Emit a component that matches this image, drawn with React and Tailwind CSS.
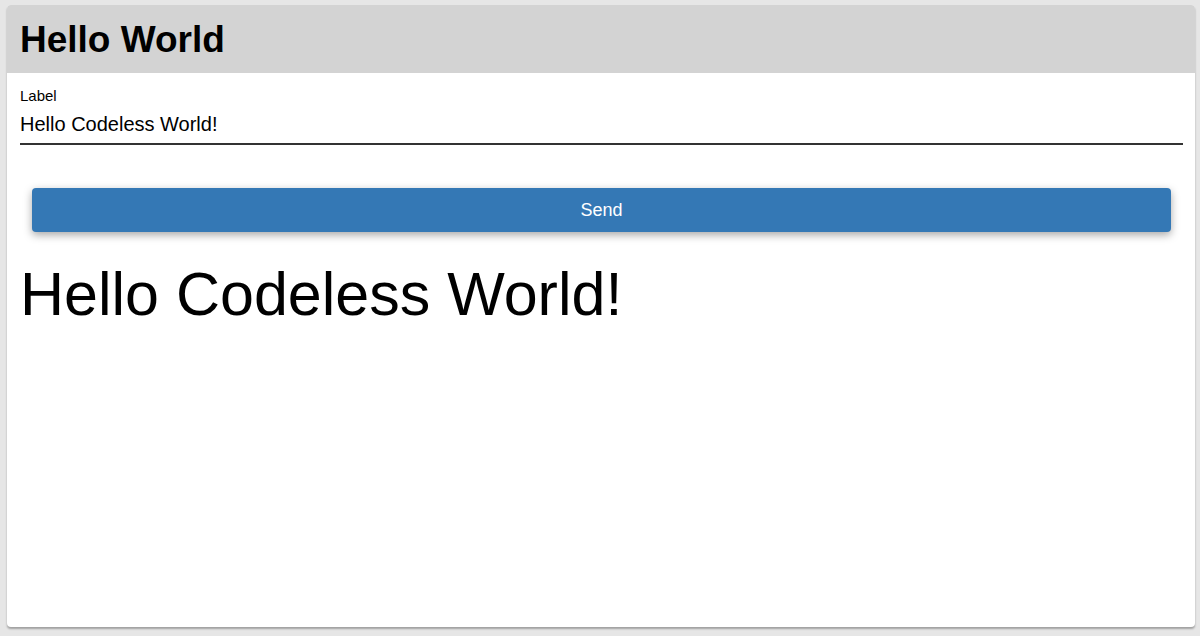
export default function App() {
  return (
    <div
      className="w-[1200px] h-[636px] bg-[#e6e6e6] pt-[5px] pl-[7px] pr-[5px] pb-[9px]"
      style={{ fontFamily: '"Liberation Sans", Arial, sans-serif' }}
    >
      <div className="h-full w-full bg-white rounded-[4px] overflow-hidden shadow-[0_2px_2px_rgba(0,0,0,0.3)] flex flex-col">
        <div className="h-[68px] bg-[#d3d3d3] flex items-center pl-[13px]">
          <h1 className="text-[37px] font-bold leading-[40px] text-black mt-[2px]">Hello World</h1>
        </div>
        <div className="pl-[13px] pr-[12px]">
          <div className="mt-[15px] text-[15px] leading-[16px] text-black">Label</div>
          <div className="mt-[8px] text-[20px] leading-[24px] text-black pb-[7px] border-b-2 border-[#333333]">
            Hello Codeless World!
          </div>
          <div className="px-[12px] mt-[43px]">
            <button className="w-full h-[44px] rounded-[4px] bg-[#3478b5] text-white text-[18px] shadow-[0_3px_8px_rgba(0,0,0,0.35)]">
              Send
            </button>
          </div>
          <div className="mt-[27px] text-[61px] leading-[70px] text-black">Hello Codeless World!</div>
        </div>
      </div>
    </div>
  );
}
